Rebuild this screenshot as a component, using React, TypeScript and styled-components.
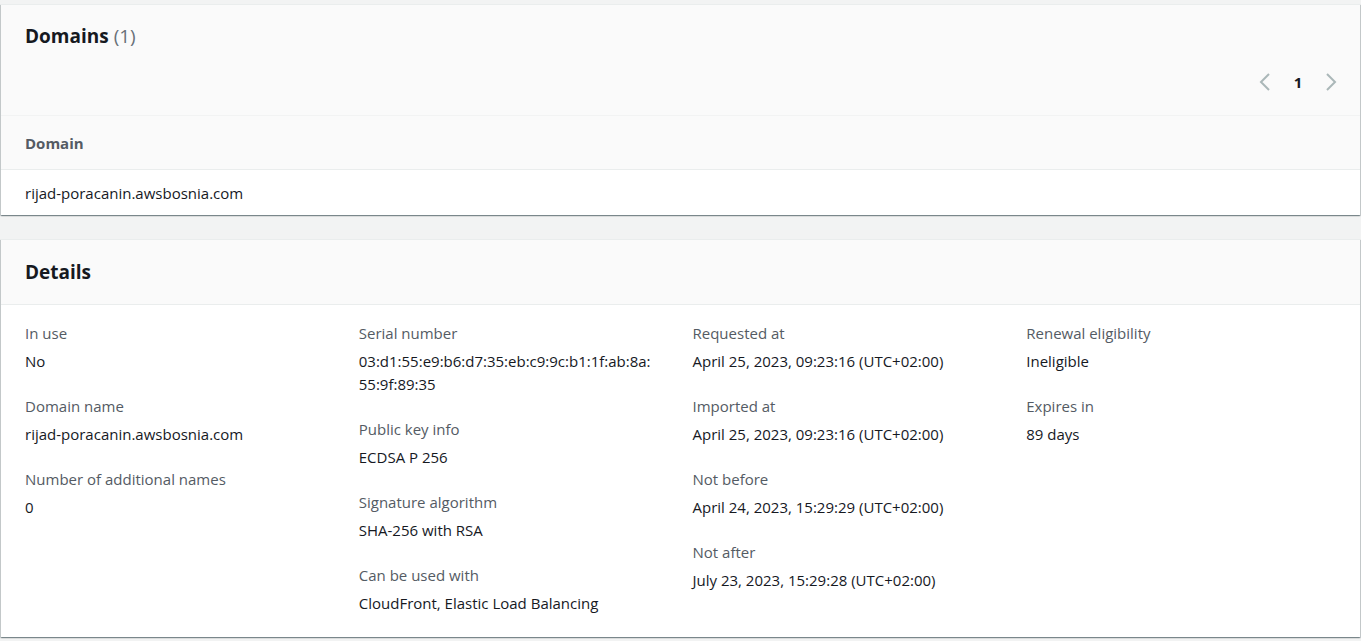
import React from "react";
import styled, { createGlobalStyle } from "styled-components";

const Global = createGlobalStyle`
  html, body { margin: 0; padding: 0; background: #f2f3f3; }
  body { font-family: "Open Sans", "Noto Sans", Arial, sans-serif; color: #16191f; font-size: 15px; -webkit-font-smoothing: antialiased; }
`;

const Page = styled.div`
  display: flex;
  flex-direction: column;
  gap: 24px;
  padding: 4px 1px 4px 1px;
`;

const Card = styled.section`
  background: #fff;
  box-shadow: 0 1px 1px 0 rgba(0, 28, 36, 0.3), 1px 1px 1px 0 rgba(0, 28, 36, 0.15), -1px 1px 1px 0 rgba(0, 28, 36, 0.15);
  border-top: 1px solid #eaeded;
`;

const Header = styled.div<{ $pad: string; $border?: boolean }>`
  background: #fafafa;
  padding: ${(p) => p.$pad};
  border-bottom: 1px solid ${(p) => (p.$border ? "#eaeded" : "#f2f3f3")};
`;

const Title = styled.h2`
  margin: 0;
  font-size: 19px;
  line-height: 22px;
  font-weight: 700;
  color: #16191f;
`;

const Count = styled.span`
  font-weight: 400;
  color: #687078;
`;

const Pager = styled.div`
  display: flex;
  justify-content: flex-end;
  align-items: center;
  margin-top: 25px;
  height: 20px;
`;

const PageBtn = styled.span`
  display: inline-flex;
  align-items: center;
  justify-content: center;
  width: 34px;
  height: 20px;
  color: #aab7b8;
`;

const PageNum = styled.span`
  display: inline-flex;
  justify-content: center;
  width: 32px;
  font-weight: 700;
  font-size: 15px;
  color: #16191f;
`;

const TableHead = styled.div`
  background: #fafafa;
  border-bottom: 1px solid #eaeded;
  height: 53px;
  display: flex;
  align-items: center;
  padding-left: 24px;
  font-weight: 700;
  color: #545b64;
`;

const TableRow = styled.div`
  height: 45px;
  display: flex;
  align-items: center;
  padding-left: 24px;
  color: #16191f;
`;

const Grid = styled.div`
  display: grid;
  grid-template-columns: repeat(4, 1fr);
  padding: 17px 0 22px 24px;
`;

const Column = styled.div`
  display: flex;
  flex-direction: column;
  gap: 22px;
  padding-right: 20px;
`;

const Item = styled.div`
  display: flex;
  flex-direction: column;
  gap: 6px;
`;

const Label = styled.div`
  color: #545b64;
  line-height: 22px;
`;

const Value = styled.div`
  color: #16191f;
  line-height: 23px;
`;

const Chevron = ({ dir }: { dir: "l" | "r" }) => (
  <svg width="12" height="18" viewBox="0 0 12 18" fill="none" stroke="currentColor" strokeWidth="2">
    {dir === "l" ? <polyline points="10,1 2,9 10,17" /> : <polyline points="2,1 10,9 2,17" />}
  </svg>
);

const columns: { label: string; value: React.ReactNode }[][] = [
  [
    { label: "In use", value: "No" },
    { label: "Domain name", value: "rijad-poracanin.awsbosnia.com" },
    { label: "Number of additional names", value: "0" },
  ],
  [
    {
      label: "Serial number",
      value: (
        <>
          03:d1:55:e9:b6:d7:35:eb:c9:9c:b1:1f:ab:8a:
          <br />
          55:9f:89:35
        </>
      ),
    },
    { label: "Public key info", value: "ECDSA P 256" },
    { label: "Signature algorithm", value: "SHA-256 with RSA" },
    { label: "Can be used with", value: "CloudFront, Elastic Load Balancing" },
  ],
  [
    { label: "Requested at", value: "April 25, 2023, 09:23:16 (UTC+02:00)" },
    { label: "Imported at", value: "April 25, 2023, 09:23:16 (UTC+02:00)" },
    { label: "Not before", value: "April 24, 2023, 15:29:29 (UTC+02:00)" },
    { label: "Not after", value: "July 23, 2023, 15:29:28 (UTC+02:00)" },
  ],
  [
    { label: "Renewal eligibility", value: "Ineligible" },
    { label: "Expires in", value: "89 days" },
  ],
];

export default function App() {
  return (
    <>
      <Global />
      <Page>
        <Card>
          <Header $pad="20px 12px 23px 24px">
            <Title>
              Domains <Count>(1)</Count>
            </Title>
            <Pager>
              <PageBtn>
                <Chevron dir="l" />
              </PageBtn>
              <PageNum>1</PageNum>
              <PageBtn>
                <Chevron dir="r" />
              </PageBtn>
            </Pager>
          </Header>
          <TableHead>Domain</TableHead>
          <TableRow>rijad-poracanin.awsbosnia.com</TableRow>
        </Card>
        <Card>
          <Header $pad="21px 24px 21px 24px" $border>
            <Title>Details</Title>
          </Header>
          <Grid>
            {columns.map((col, i) => (
              <Column key={i}>
                {col.map((it) => (
                  <Item key={it.label}>
                    <Label>{it.label}</Label>
                    <Value>{it.value}</Value>
                  </Item>
                ))}
              </Column>
            ))}
          </Grid>
        </Card>
      </Page>
    </>
  );
}
